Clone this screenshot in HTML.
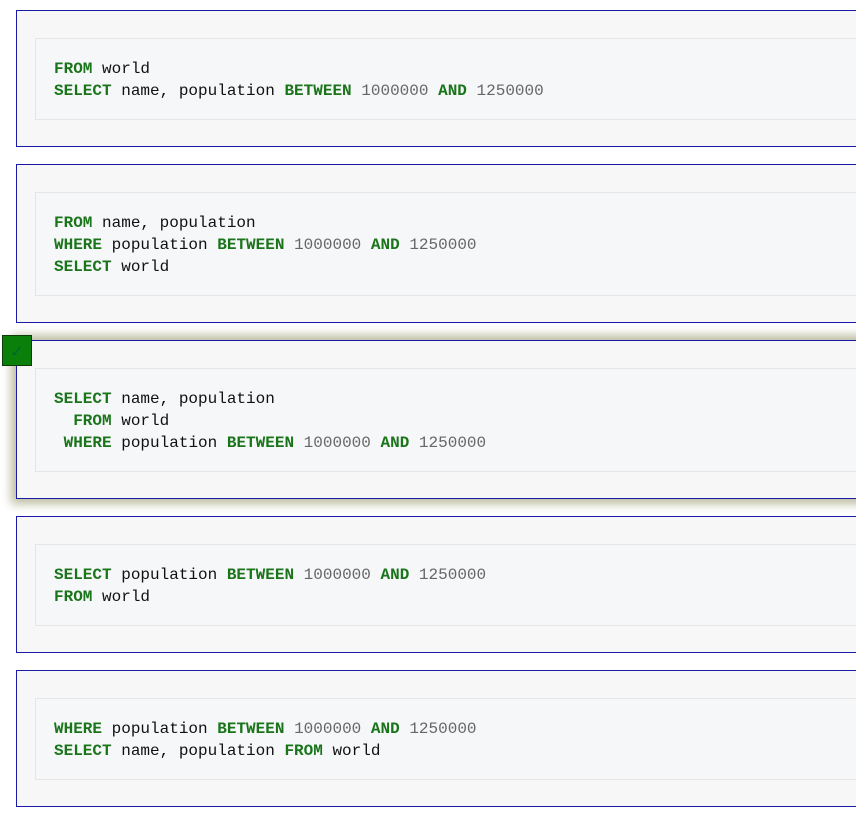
<!DOCTYPE html>
<html><head><style>
body{margin:0;background:#fff;width:856px;height:815px;overflow:hidden;position:relative;font-family:"Liberation Sans",sans-serif}
.box{position:absolute;left:16px;width:860px;background:#f7f7f7;border:1px solid #1a1aa8;box-sizing:border-box}
.sel{box-shadow:0 0 9px 5px #bdbda2}
pre{position:absolute;left:18px;top:27px;width:860px;margin:0;padding:19px 18px 17px;background:#f6f7f9;border:1px solid #e6e6e6;font-family:"Liberation Mono",monospace;font-size:16px;line-height:22px;color:#111}
b{color:#1a751a}
i{font-style:normal;color:#666}
.chk{position:absolute;left:2px;top:335px;width:28px;height:29px;background:#0a800a;border:1px solid #0b3d0b;color:#063;font-size:16px;text-align:center;line-height:34px}
</style></head><body>
<div class="box" style="top:10px;height:137px"><pre><b>FROM</b> world
<b>SELECT</b> name, population <b>BETWEEN</b> <i>1000000</i> <b>AND</b> <i>1250000</i></pre></div>
<div class="box" style="top:164px;height:159px"><pre><b>FROM</b> name, population
<b>WHERE</b> population <b>BETWEEN</b> <i>1000000</i> <b>AND</b> <i>1250000</i>
<b>SELECT</b> world</pre></div>
<div class="box sel" style="top:340px;height:159px"><pre><b>SELECT</b> name, population
  <b>FROM</b> world
 <b>WHERE</b> population <b>BETWEEN</b> <i>1000000</i> <b>AND</b> <i>1250000</i></pre></div>
<div class="chk">✓</div>
<div class="box" style="top:516px;height:137px"><pre><b>SELECT</b> population <b>BETWEEN</b> <i>1000000</i> <b>AND</b> <i>1250000</i>
<b>FROM</b> world</pre></div>
<div class="box" style="top:670px;height:137px"><pre><b>WHERE</b> population <b>BETWEEN</b> <i>1000000</i> <b>AND</b> <i>1250000</i>
<b>SELECT</b> name, population <b>FROM</b> world</pre></div>
</body></html>
